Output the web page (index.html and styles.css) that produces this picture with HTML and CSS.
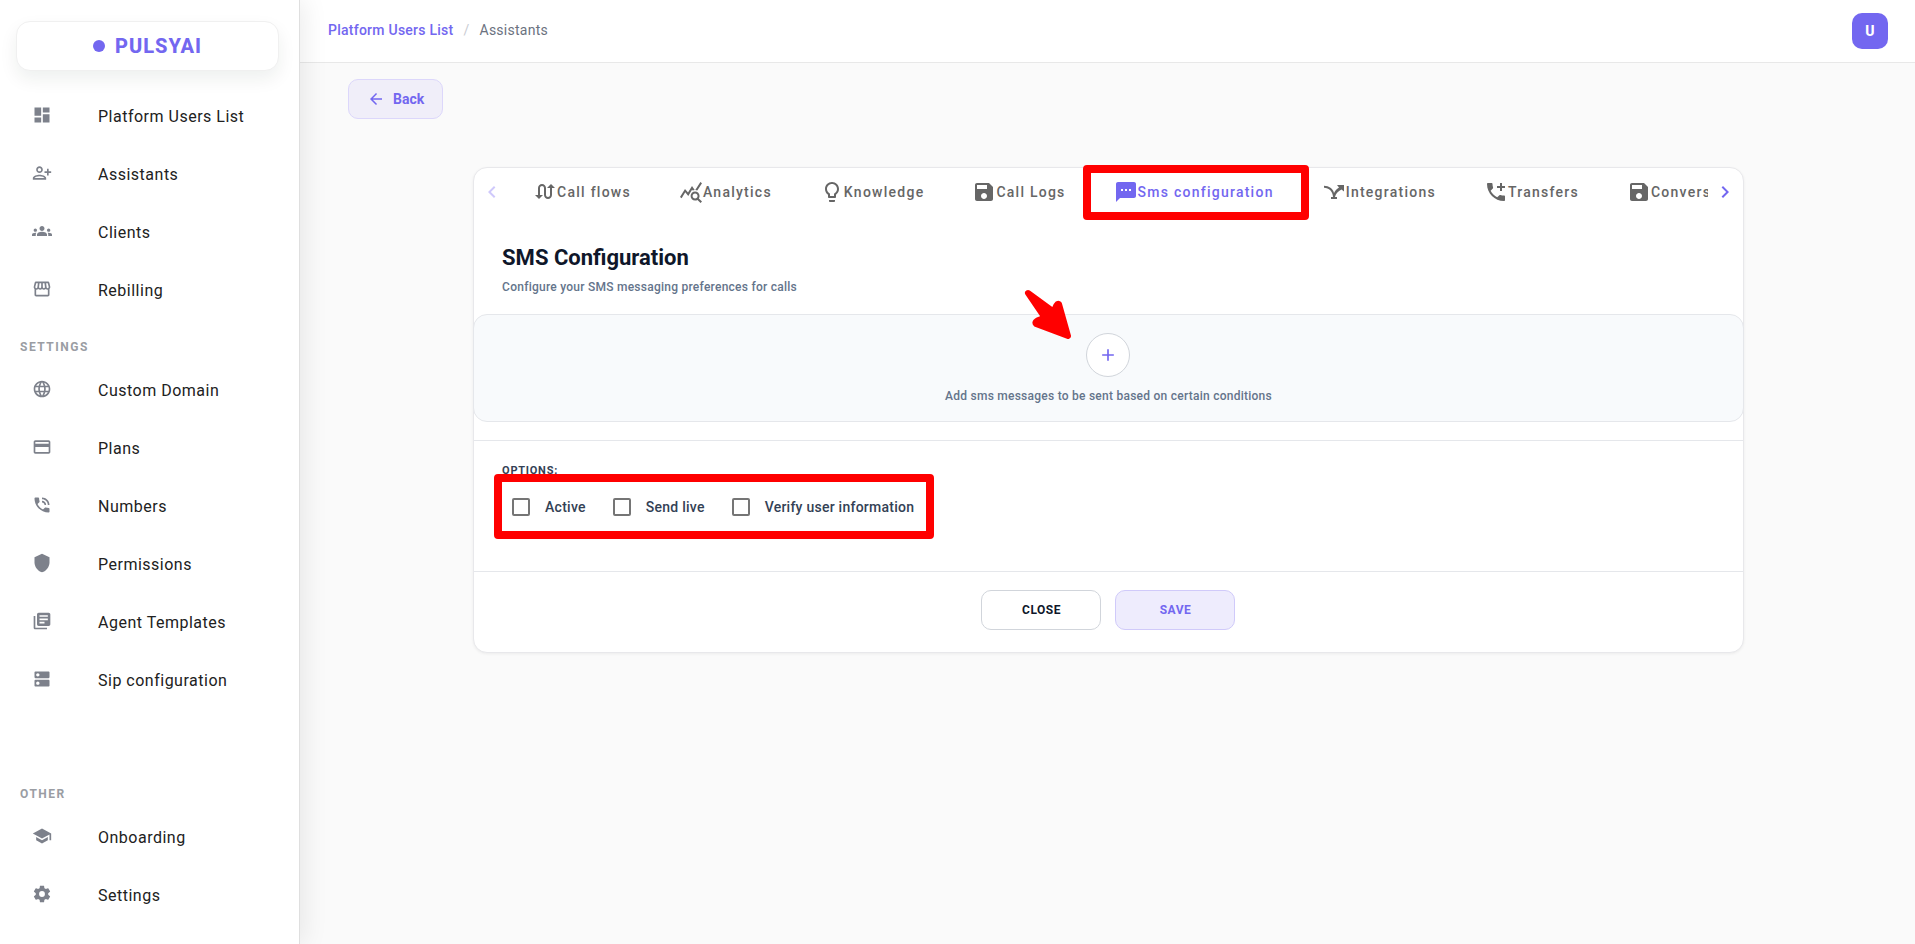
FILE: index.html
```html
<!DOCTYPE html>
<html lang="en">
<head>
<meta charset="utf-8">
<title>PulsyAI – Assistants</title>
<link rel="stylesheet" href="styles.css">
</head>
<body>
<div class="app">
  <aside class="sidebar">
    <a class="logo" href="#"><span class="logo-dot"></span>PULSYAI</a>
    <nav class="nav">
      <a class="nav-item" href="#"><svg class="nav-icon" viewBox="0 0 24 24"><path d="M3 13h8V3H3v10zm0 8h8v-6H3v6zm10 0h8V11h-8v10zm0-18v6h8V3h-8z"/></svg>Platform Users List</a>
      <a class="nav-item" href="#"><svg class="nav-icon" viewBox="0 0 24 24"><path d="M13 8c0-2.21-1.79-4-4-4S5 5.79 5 8s1.79 4 4 4 4-1.79 4-4zm-2 0c0 1.1-.9 2-2 2s-2-.9-2-2 .9-2 2-2 2 .9 2 2zM1 18v2h16v-2c0-2.66-5.33-4-8-4s-8 1.34-8 4zm2 0c.2-.71 3.3-2 6-2 2.69 0 5.77 1.28 6 2H3zM20 15v-3h3v-2h-3V7h-2v3h-3v2h3v3h2z"/></svg>Assistants</a>
      <a class="nav-item" href="#"><svg class="nav-icon" viewBox="0 0 24 24"><path d="M12 12.75c1.63 0 3.07.39 4.24.9 1.08.48 1.76 1.56 1.76 2.73V18H6v-1.61c0-1.18.68-2.26 1.76-2.73 1.17-.52 2.61-.91 4.24-.91zM4 13c1.1 0 2-.9 2-2s-.9-2-2-2-2 .9-2 2 .9 2 2 2zm1.13 1.1c-.37-.06-.74-.1-1.13-.1-.99 0-1.93.21-2.78.58C.48 14.9 0 15.62 0 16.43V18h4.5v-1.61c0-.83.23-1.61.63-2.29zM20 13c1.1 0 2-.9 2-2s-.9-2-2-2-2 .9-2 2 .9 2 2 2zm4 3.43c0-.81-.48-1.53-1.22-1.85-.85-.37-1.79-.58-2.78-.58-.39 0-.76.04-1.13.1.4.68.63 1.46.63 2.29V18H24v-1.57zM12 6c1.66 0 3 1.34 3 3s-1.34 3-3 3-3-1.34-3-3 1.34-3 3-3z"/></svg>Clients</a>
      <a class="nav-item" href="#"><svg class="nav-icon" viewBox="0 0 24 24"><path d="M21.9 8.89l-1.05-4.37c-.22-.9-1-1.52-1.91-1.52H5.05c-.9 0-1.69.63-1.9 1.52L2.1 8.89c-.24 1.02-.02 2.06.62 2.88.08.11.19.19.28.29V19c0 1.1.9 2 2 2h14c1.1 0 2-.9 2-2v-6.94c.09-.09.2-.18.28-.28.64-.82.87-1.87.62-2.89zm-2.99-3.9l1.05 4.37c.1.42.01.84-.25 1.17-.14.18-.44.47-.94.47-.61 0-1.14-.49-1.21-1.14L16.98 5l1.93-.01zM13 5h1.96l.54 4.52c.05.39-.07.78-.33 1.07-.22.26-.54.41-.95.41-.67 0-1.22-.59-1.22-1.31V5zM8.49 9.52L9.04 5H11v4.69c0 .72-.55 1.31-1.29 1.31-.34 0-.65-.15-.89-.41-.25-.29-.37-.68-.33-1.07zm-4.45-.16L5.05 5h1.97l-.58 4.86c-.08.65-.6 1.14-1.21 1.14-.49 0-.8-.29-.93-.47-.27-.32-.36-.75-.26-1.17zM5 19v-6.03c.08.01.15.03.23.03.87 0 1.66-.36 2.24-.95.6.6 1.4.95 2.31.95.87 0 1.65-.36 2.23-.93.59.57 1.39.93 2.29.93.84 0 1.64-.35 2.24-.95.58.59 1.37.95 2.24.95.08 0 .15-.02.23-.03V19H5z"/></svg>Rebilling</a>

      <h2 class="nav-label">SETTINGS</h2>
      <a class="nav-item" href="#"><svg class="nav-icon" viewBox="0 0 24 24"><path d="M11.99 2C6.47 2 2 6.48 2 12s4.47 10 9.99 10C17.52 22 22 17.52 22 12S17.52 2 11.99 2zm6.93 6h-2.95c-.32-1.25-.78-2.45-1.38-3.56 1.84.63 3.37 1.91 4.33 3.56zM12 4.04c.83 1.2 1.48 2.53 1.91 3.96h-3.82c.43-1.43 1.08-2.76 1.91-3.96zM4.26 14C4.1 13.36 4 12.69 4 12s.1-1.36.26-2h3.38c-.08.66-.14 1.32-.14 2 0 .68.06 1.34.14 2H4.26zm.82 2h2.95c.32 1.25.78 2.45 1.38 3.56-1.84-.63-3.37-1.9-4.33-3.56zm2.95-8H5.08c.96-1.66 2.49-2.93 4.33-3.56C8.81 5.55 8.35 6.75 8.03 8zM12 19.96c-.83-1.2-1.48-2.53-1.91-3.96h3.82c-.43 1.43-1.08 2.76-1.91 3.96zM14.34 14H9.66c-.09-.66-.16-1.32-.16-2 0-.68.07-1.35.16-2h4.68c.09.65.16 1.32.16 2 0 .68-.07 1.34-.16 2zm.25 5.56c.6-1.11 1.06-2.31 1.38-3.56h2.95c-.96 1.65-2.49 2.93-4.33 3.56zM16.36 14c.08-.66.14-1.32.14-2 0-.68-.06-1.34-.14-2h3.38c.16.64.26 1.31.26 2s-.1 1.36-.26 2h-3.38z"/></svg>Custom Domain</a>
      <a class="nav-item" href="#"><svg class="nav-icon" viewBox="0 0 24 24"><path d="M20 4H4c-1.11 0-1.99.89-1.99 2L2 18c0 1.11.89 2 2 2h16c1.11 0 2-.89 2-2V6c0-1.11-.89-2-2-2zm0 14H4v-6h16v6zm0-10H4V6h16v2z"/></svg>Plans</a>
      <a class="nav-item" href="#"><svg class="nav-icon" viewBox="0 0 24 24"><path d="M20 15.5c-1.25 0-2.45-.2-3.57-.57-.35-.11-.74-.03-1.02.24l-2.2 2.2c-2.83-1.44-5.15-3.75-6.59-6.59l2.2-2.21c.28-.26.36-.65.25-1C8.7 6.45 8.5 5.25 8.5 4c0-.55-.45-1-1-1H4c-.55 0-1 .45-1 1 0 9.39 7.61 17 17 17 .55 0 1-.45 1-1v-3.5c0-.55-.45-1-1-1zM19 12h2c0-4.97-4.03-9-9-9v2c3.87 0 7 3.13 7 7zm-4 0h2c0-2.76-2.24-5-5-5v2c1.66 0 3 1.34 3 3z"/></svg>Numbers</a>
      <a class="nav-item" href="#"><svg class="nav-icon" viewBox="0 0 24 24"><path d="M12 1L3 5v6c0 5.55 3.84 10.74 9 12 5.16-1.26 9-6.45 9-12V5l-9-4z"/></svg>Permissions</a>
      <a class="nav-item" href="#"><svg class="nav-icon" viewBox="0 0 24 24"><path d="M4 6H2v14c0 1.1.9 2 2 2h14v-2H4V6zm16-4H8c-1.1 0-2 .9-2 2v12c0 1.1.9 2 2 2h12c1.1 0 2-.9 2-2V4c0-1.1-.9-2-2-2zm-1 9H9V9h10v2zm-4 4H9v-2h6v2zm4-8H9V5h10v2z"/></svg>Agent Templates</a>
      <a class="nav-item" href="#"><svg class="nav-icon" viewBox="0 0 24 24"><path d="M20 13H4c-.55 0-1 .45-1 1v6c0 .55.45 1 1 1h16c.55 0 1-.45 1-1v-6c0-.55-.45-1-1-1zM7 19c-1.1 0-2-.9-2-2s.9-2 2-2 2 .9 2 2-.9 2-2 2zM20 3H4c-.55 0-1 .45-1 1v6c0 .55.45 1 1 1h16c.55 0 1-.45 1-1V4c0-.55-.45-1-1-1zM7 9c-1.1 0-2-.9-2-2s.9-2 2-2 2 .9 2 2-.9 2-2 2z"/></svg>Sip configuration</a>

      <h2 class="nav-label nav-label-spaced">OTHER</h2>
      <a class="nav-item" href="#"><svg class="nav-icon" viewBox="0 0 24 24"><path d="M5 13.18v4L12 21l7-3.82v-4L12 17l-7-3.82zM12 3L1 9l11 6 9-4.91V17h2V9L12 3z"/></svg>Onboarding</a>
      <a class="nav-item" href="#"><svg class="nav-icon" viewBox="0 0 24 24"><path d="M12,15.5A3.5,3.5 0 0,1 8.5,12A3.5,3.5 0 0,1 12,8.5A3.5,3.5 0 0,1 15.5,12A3.5,3.5 0 0,1 12,15.5M19.43,12.97C19.47,12.65 19.5,12.33 19.5,12C19.5,11.67 19.47,11.34 19.43,11L21.54,9.37C21.73,9.22 21.78,8.95 21.66,8.73L19.66,5.27C19.54,5.05 19.27,4.96 19.05,5.05L16.56,6.05C16.04,5.66 15.5,5.32 14.87,5.07L14.5,2.42C14.46,2.18 14.25,2 14,2H10C9.75,2 9.54,2.18 9.5,2.42L9.13,5.07C8.5,5.32 7.96,5.66 7.44,6.05L4.95,5.05C4.73,4.96 4.46,5.05 4.34,5.27L2.34,8.73C2.21,8.95 2.27,9.22 2.46,9.37L4.57,11C4.53,11.34 4.5,11.67 4.5,12C4.5,12.33 4.53,12.65 4.57,12.97L2.46,14.63C2.27,14.78 2.21,15.05 2.34,15.27L4.34,18.73C4.46,18.95 4.73,19.03 4.95,18.95L7.44,17.94C7.96,18.34 8.5,18.68 9.13,18.93L9.5,21.58C9.54,21.82 9.75,22 10,22H14C14.25,22 14.46,21.82 14.5,21.58L14.87,18.93C15.5,18.67 16.04,18.34 16.56,17.94L19.05,18.95C19.27,19.03 19.54,18.95 19.66,18.73L21.66,15.27C21.78,15.05 21.73,14.78 21.54,14.63L19.43,12.97Z"/></svg>Settings</a>
    </nav>
  </aside>

  <div class="page">
    <header class="topbar">
      <nav class="crumbs" aria-label="Breadcrumb">
        <a class="crumb-link" href="#">Platform Users List</a>
        <span class="crumb-sep">/</span>
        <span class="crumb-current">Assistants</span>
      </nav>
      <button class="avatar" type="button">U</button>
    </header>

    <main class="content">
      <button class="back" type="button"><svg class="back-icon" viewBox="0 0 24 24"><path d="M20 11H7.83l5.59-5.59L12 4l-8 8 8 8 1.41-1.41L7.83 13H20v-2z"/></svg>Back</button>

      <section class="card">
        <div class="tabs">
          <button class="tab-arrow tab-arrow-off" type="button" aria-label="Previous tabs" disabled><svg class="icon" viewBox="0 0 24 24"><path d="M15.41 16.58L10.83 12l4.58-4.59L14 6l-6 6 6 6 1.41-1.42z"/></svg></button>
          <div class="tab-list" role="tablist">
            <button class="tab" type="button" role="tab"><svg class="icon" viewBox="0 0 24 24"><path d="M18 4l-4 4h3v7c0 1.1-.9 2-2 2s-2-.9-2-2V8c0-2.21-1.79-4-4-4S5 5.79 5 8v7H2l4 4 4-4H7V8c0-1.1.9-2 2-2s2 .9 2 2v7c0 2.21 1.79 4 4 4s4-1.79 4-4V8h3l-4-4z"/></svg>Call flows</button>
            <button class="tab" type="button" role="tab"><svg class="icon" viewBox="0 0 24 24"><path d="M19.88 18.47c.44-.7.7-1.51.7-2.39 0-2.49-2.01-4.5-4.5-4.5s-4.5 2.01-4.5 4.5 2.01 4.5 4.49 4.5c.88 0 1.7-.26 2.39-.7L21.58 23 23 21.58l-3.12-3.11zm-3.8.11c-1.38 0-2.5-1.12-2.5-2.5s1.12-2.5 2.5-2.5 2.5 1.12 2.5 2.5-1.12 2.5-2.5 2.5zm-.36-8.5c-.74.02-1.45.18-2.1.45l-.55-.83-3.8 6.18-3.01-3.52-3.63 5.81L1 17l5-8 3 3.5L13 6l2.72 4.08zm2.59.5c-.64-.28-1.33-.45-2.05-.49L21.38 2 23 3.18l-4.69 7.4z"/></svg>Analytics</button>
            <button class="tab" type="button" role="tab"><svg class="icon" viewBox="0 0 24 24"><path d="M9 21c0 .5.4 1 1 1h4c.6 0 1-.5 1-1v-1H9v1zm3-19C8.1 2 5 5.1 5 9c0 2.4 1.2 4.5 3 5.7V17c0 .5.4 1 1 1h6c.6 0 1-.5 1-1v-2.3c1.8-1.3 3-3.4 3-5.7 0-3.9-3.1-7-7-7zm2.9 11.1l-.9.6V16h-4v-2.3l-.8-.6C7.8 12.2 7 10.6 7 9c0-2.8 2.2-5 5-5s5 2.2 5 5c0 1.6-.8 3.2-2.1 4.1z"/></svg>Knowledge</button>
            <button class="tab" type="button" role="tab"><svg class="icon" viewBox="0 0 24 24"><path d="M17 3H5c-1.11 0-2 .9-2 2v14c0 1.1.89 2 2 2h14c1.1 0 2-.9 2-2V7l-4-4zm-5 16c-1.66 0-3-1.34-3-3s1.34-3 3-3 3 1.34 3 3-1.34 3-3 3zm3-10H5V5h10v4z"/></svg>Call Logs</button>
            <button class="tab tab-active" type="button" role="tab" aria-selected="true"><svg class="icon" viewBox="0 0 24 24"><path d="M20 2H4c-1.1 0-1.99.9-1.99 2L2 22l4-4h14c1.1 0 2-.9 2-2V4c0-1.1-.9-2-2-2zM9 11H7V9h2v2zm4 0h-2V9h2v2zm4 0h-2V9h2v2z"/></svg>Sms configuration</button>
            <button class="tab" type="button" role="tab"><svg class="icon" viewBox="0 0 24 24"><path d="M2 5.800C7 6 11 8.500 12 13C13 10.800 14.500 9 17 7.500L15 5H22V11.500L19.500 9.500C16 11.500 13.500 13.500 13 17H15V19H9V17H11C10.800 11.500 7 8 2 7.800Z"/></svg>Integrations</button>
            <button class="tab" type="button" role="tab"><svg class="icon" viewBox="0 0 24 24"><path d="M20 15.500c-1.250 0-2.450-.2-3.570-.57-.35-.11-.74-.03-1.020.24l-2.200 2.200c-2.830-1.440-5.150-3.750-6.590-6.580l2.200-2.210c.28-.27.36-.66.25-1.010C8.700 6.450 8.500 5.250 8.500 4c0-.55-.45-1-1-1H4c-.55 0-1 .45-1 1 0 9.390 7.610 17 17 17 .55 0 1-.45 1-1v-3.500c0-.55-.45-1-1-1zM21 6h-3V3h-2v3h-3v2h3v3h2V8h3z"/></svg>Transfers</button>
            <button class="tab" type="button" role="tab"><svg class="icon" viewBox="0 0 24 24"><path d="M17 3H5c-1.11 0-2 .9-2 2v14c0 1.1.89 2 2 2h14c1.1 0 2-.9 2-2V7l-4-4zm-5 16c-1.66 0-3-1.34-3-3s1.34-3 3-3 3 1.34 3 3-1.34 3-3 3zm3-10H5V5h10v4z"/></svg>Conversations</button>
          </div>
          <button class="tab-arrow" type="button" aria-label="Next tabs"><svg class="icon" viewBox="0 0 24 24"><path d="M8.590 16.580L13.170 12 8.590 7.410 10 6l6 6-6 6-1.410-1.420z"/></svg></button>
        </div>

        <div class="intro">
          <h1 class="title">SMS Configuration</h1>
          <p class="subtitle">Configure your SMS messaging preferences for calls</p>
        </div>

        <div class="add-panel">
          <button class="add" type="button" aria-label="Add message"><svg class="add-icon" viewBox="0 0 24 24"><path d="M19 13h-6v6h-2v-6H5v-2h6V5h2v6h6v2z"/></svg></button>
          <p class="add-text">Add sms messages to be sent based on certain conditions</p>
          <svg class="pointer" viewBox="0 0 48 52"><path d="M4 4L30 23Q32 14 35 15L44 47L12 35Q9 32 21 29Z"/></svg>
        </div>

        <fieldset class="options">
          <legend class="options-label">OPTIONS:</legend>
          <div class="checks">
            <label class="check"><input class="box" type="checkbox">Active</label>
            <label class="check"><input class="box" type="checkbox">Send live</label>
            <label class="check"><input class="box" type="checkbox">Verify user information</label>
          </div>
        </fieldset>

        <footer class="actions">
          <button class="btn" type="button">CLOSE</button>
          <button class="btn btn-save" type="button">SAVE</button>
        </footer>

        <div class="mark mark-tab"></div>
        <div class="mark mark-options"></div>
      </section>
    </main>
  </div>
</div>
</body>
</html>
```

FILE: styles.css
```css
* { box-sizing: border-box; }

body {
  margin: 0;
  font-family: Roboto, "Liberation Sans", sans-serif;
  background: #fafafa;
}

button {
  font-family: inherit;
  cursor: pointer;
}

a { text-decoration: none; }

.app {
  display: flex;
  min-height: 100vh;
}

/* Sidebar */
.sidebar {
  position: relative;
  z-index: 1;
  flex: none;
  width: 300px;
  padding-top: 21px;
  background: #fff;
  border-right: 1px solid #dfdfdf;
  box-shadow: 4px 0 24px rgba(0, 0, 0, 0.08);
}

.logo {
  display: flex;
  align-items: center;
  justify-content: center;
  gap: 10px;
  height: 50px;
  margin: 0 20px 16px 16px;
  border: 1px solid #f0f0f0;
  border-radius: 14px;
  background: #fff;
  box-shadow: 0 8px 18px rgba(15, 40, 35, 0.07);
  color: #7367f0;
  font-size: 20px;
  font-weight: 800;
  letter-spacing: 1px;
}

.logo-dot {
  width: 12px;
  height: 12px;
  border-radius: 50%;
  background: #7367f0;
}

.nav-item {
  display: flex;
  align-items: center;
  gap: 46px;
  height: 58px;
  padding-left: 32px;
  color: #212121;
  font-size: 16px;
  letter-spacing: 0.5px;
}

.nav-icon {
  width: 20px;
  height: 20px;
  margin-bottom: 2px;
  fill: #7d818b;
}

.nav-label {
  height: 42px;
  margin: 0;
  padding: 7px 0 0 20px;
  color: #9a9da3;
  font-size: 12px;
  font-weight: 700;
  line-height: 42px;
  letter-spacing: 1.5px;
}

.nav-label-spaced { margin-top: 57px; }

/* Page */
.page {
  flex: 1;
  min-width: 0;
}

.topbar {
  display: flex;
  align-items: flex-start;
  justify-content: space-between;
  height: 63px;
  padding: 13px 27px 0 28px;
  background: #fff;
  border-bottom: 1px solid #e8e8e8;
}

.crumbs {
  display: flex;
  gap: 10px;
  font-size: 14px;
  line-height: 34px;
  letter-spacing: 0.25px;
}

.crumb-link { color: #7367f0; font-weight: 500; }
.crumb-sep { color: #c9ccd3; }
.crumb-current { color: #6b7280; }

.avatar {
  width: 36px;
  height: 36px;
  padding: 0;
  border: 0;
  border-radius: 10px;
  background: #7367f0;
  color: #fff;
  font-size: 14px;
  font-weight: 800;
}

.content { padding: 16px 44px 48px 46px; }

.back {
  display: flex;
  align-items: center;
  gap: 8px;
  height: 40px;
  margin-left: 2px;
  padding: 0 18px;
  border: 1px solid #dcd7fb;
  border-radius: 10px;
  background: #f0eef9;
  color: #7367f0;
  font-size: 14px;
  font-weight: 700;
}

.back-icon {
  width: 18px;
  height: 18px;
  fill: #7367f0;
}

.card {
  position: relative;
  width: 83.333%;
  margin: 48px auto 0;
  border: 1px solid #e8e8eb;
  border-radius: 14px;
  background: #fff;
  box-shadow: 0 1px 3px rgba(0, 0, 0, 0.06);
}

.icon {
  flex: none;
  width: 24px;
  height: 24px;
  fill: currentColor;
}

/* Tabs */
.tabs {
  display: flex;
  height: 48px;
}

.tab-arrow {
  display: flex;
  flex: none;
  align-items: center;
  justify-content: center;
  width: 35px;
  padding: 0;
  border: 0;
  background: none;
  color: #7367f0;
}

.tab-arrow-off { color: #cfc9fb; }

.tab-list {
  display: flex;
  flex: 1;
  min-width: 0;
  overflow: hidden;
}

.tab {
  display: flex;
  flex: none;
  align-items: center;
  padding: 0 24px;
  border: 0;
  background: none;
  color: #666;
  font-size: 14px;
  font-weight: 500;
  letter-spacing: 1.25px;
}

.tab-active { color: #7367f0; }

/* Card body */
.intro { padding: 28px 28px 18px; }

.title {
  margin: 0;
  color: #0f172a;
  font-size: 22px;
  font-weight: 700;
  line-height: 28px;
}

.subtitle {
  margin: 6px 0 0;
  color: #64748b;
  font-size: 12px;
  font-weight: 500;
  line-height: 18px;
  letter-spacing: 0.25px;
}

.add-panel {
  position: relative;
  display: flex;
  flex-direction: column;
  align-items: center;
  gap: 10px;
  margin: 0 -1px 18px;
  padding: 18px 0 16px;
  border: 1px solid #e5e7eb;
  border-radius: 14px;
  background: #f8fafc;
}

.add {
  display: flex;
  align-items: center;
  justify-content: center;
  width: 44px;
  height: 44px;
  padding: 0;
  border: 1px solid #d1d5db;
  border-radius: 50%;
  background: #fff;
}

.add-icon {
  width: 20px;
  height: 20px;
  fill: #7367f0;
}

.add-text {
  margin: 0;
  color: #64748b;
  font-size: 12px;
  font-weight: 500;
  line-height: 18px;
  letter-spacing: 0.25px;
}

.options {
  margin: 0;
  padding: 21px 28px 44px;
  border: 0;
  border-top: 1px solid #e5e7eb;
}

.options-label {
  float: left;
  padding: 0;
  color: #334155;
  font-size: 11px;
  font-weight: 700;
  line-height: 18px;
  letter-spacing: 0.75px;
}

.checks {
  display: flex;
  clear: left;
  gap: 27px;
  padding: 7px 10px 0;
}

.check {
  display: flex;
  align-items: center;
  gap: 15px;
  height: 40px;
  color: #334155;
  font-size: 14px;
  font-weight: 500;
  letter-spacing: 0.25px;
}

.box {
  appearance: none;
  width: 18px;
  height: 18px;
  margin: 0;
  border: 2px solid #757575;
  border-radius: 2px;
}

.actions {
  display: flex;
  justify-content: center;
  gap: 14px;
  padding: 18px 28px 22px;
  border-top: 1px solid #e5e7eb;
}

.btn {
  width: 120px;
  height: 40px;
  padding: 0;
  border: 1px solid #d1d5db;
  border-radius: 10px;
  background: #fff;
  color: #0f172a;
  font-size: 12px;
  font-weight: 700;
  letter-spacing: 0.5px;
}

.btn-save {
  border-color: #d0cafa;
  background: #eeecfd;
  color: #7367f0;
}

/* Highlights drawn over the page */
.mark {
  position: absolute;
  border: 8px solid #f00;
  border-radius: 4px;
  pointer-events: none;
}

.mark-tab {
  top: -3px;
  left: 609px;
  width: 226px;
  height: 55px;
}

.mark-options {
  top: 306px;
  left: 20px;
  width: 440px;
  height: 65px;
}

.pointer {
  position: absolute;
  top: -26px;
  right: calc(50% + 37px);
  width: 48px;
  height: 52px;
  fill: #f00;
  stroke: #f00;
  stroke-width: 6px;
  stroke-linejoin: round;
}
```
